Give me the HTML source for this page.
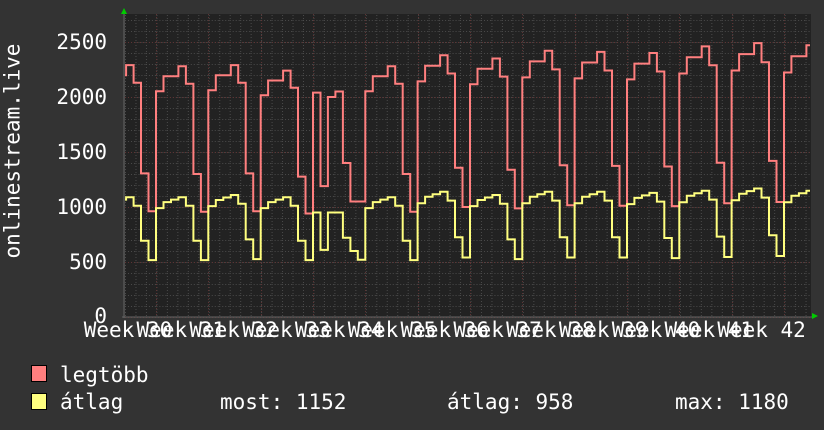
<!DOCTYPE html>
<html><head><meta charset="utf-8"><style>
body{margin:0;width:824px;height:430px;background:#333;overflow:hidden;position:relative;font-family:"DejaVu Sans Mono","Liberation Mono",monospace;color:#fff}
.t{position:absolute;font-size:21px;line-height:1;white-space:pre}
.yl{position:absolute;font-size:21px;line-height:1;width:80px;text-align:right;left:27px}
.xl{position:absolute;font-size:21px;line-height:1;width:90px;text-align:center;top:320px}
.sq{position:absolute;left:31px;width:14px;height:15px;border:1px solid #000}
</style></head><body>
<svg width="824" height="430" style="position:absolute;left:0;top:0">
<defs>
<pattern id="mg" x="125" y="317" width="10.47" height="11" patternUnits="userSpaceOnUse">
<line x1="0.5" y1="0" x2="0.5" y2="11" stroke="#4a4a4a" stroke-dasharray="1,2"/>
<line x1="0" y1="0.5" x2="10.47" y2="0.5" stroke="#4a4a4a" stroke-dasharray="1,2"/>
</pattern>
</defs>
<rect x="125" y="14" width="686" height="303" fill="#222"/>
<rect x="125" y="14" width="686" height="303" fill="url(#mg)"/>
<g id="maj" stroke="#5e3434" stroke-dasharray="1,2"></g>
<polyline id="red" fill="none" stroke="#ff7f7f" stroke-width="2"/>
<polyline id="yel" fill="none" stroke="#ffff7f" stroke-width="2"/>
<line x1="124" y1="12" x2="124" y2="318" stroke="#666"/>
<line x1="122" y1="317" x2="812" y2="317" stroke="#666"/>
<polygon points="121,14 127,14 124,8" fill="#0c0"/>
<polygon points="812,313 812,319 818,316" fill="#0c0"/>
</svg>
<div class="t" style="left:-80px;top:155px;transform:rotate(-90deg);width:186px;text-align:center">onlinestream.live</div>
<div class="yl" style="top:32px">2500</div>
<div class="yl" style="top:87px">2000</div>
<div class="yl" style="top:142px">1500</div>
<div class="yl" style="top:197px">1000</div>
<div class="yl" style="top:252px">500</div>
<div class="yl" style="top:306px">0</div>
<div id="xls"></div>
<div class="sq" style="top:365px;background:#ff7f7f"></div>
<div class="sq" style="top:393px;background:#ffff7f"></div>
<div class="t" style="left:60px;top:365px">legtöbb</div>
<div class="t" style="left:60px;top:392px">átlag</div>
<div class="t" style="left:220px;top:392px">most: 1152</div>
<div class="t" style="left:447px;top:392px">átlag: 958</div>
<div class="t" style="left:675px;top:392px">max: 1180</div>
<script>
var ns="http://www.w3.org/2000/svg";
var maj=document.getElementById("maj");
for(var v=0;v<=2500;v+=500){var y=317-v*0.11;var l=document.createElementNS(ns,"line");l.setAttribute("x1",125);l.setAttribute("x2",811);l.setAttribute("y1",y+0.5);l.setAttribute("y2",y+0.5);maj.appendChild(l);}
for(var k=0;k<13;k++){var x=Math.round(156+52.33*k)+0.5;var l=document.createElementNS(ns,"line");l.setAttribute("x1",x);l.setAttribute("x2",x);l.setAttribute("y1",14);l.setAttribute("y2",317);maj.appendChild(l);}
var xh="";for(var k=0;k<13;k++){xh+='<div class="xl" style="left:'+(128+52.8*k-45)+'px">Week '+(30+k)+'</div>';}
document.getElementById("xls").innerHTML=xh;
var rp=[0.9,0.96,0.96,1.0,0.93,0.57,0.42];
var yp=[0.9,0.95,0.97,0.99,0.92,0.63,0.47];
var peaksR=[2290,2280,2290,2240,2060,2280,2380,2350,2420,2410,2400,2460,2490,2470];
var peaksY=[1100,1100,1120,1100,960,1100,1150,1120,1150,1150,1140,1160,1180,1160];
function build(pat,peaks,special){var pts=[];var step=52.33/7;
for(var w=-1;w<13;w++){var x0=156+52.33*w;for(var d=0;d<7;d++){var v=peaks[w+1]*pat[d];
if(special&&w==3){v=special[d];}
var xa=x0+d*step,xb=x0+(d+1)*step;var y=317-v*0.11;
xa=Math.max(125,Math.min(810,xa));xb=Math.max(125,Math.min(810,xb));if(xb<=xa)continue;
pts.push(xa.toFixed(1)+","+y.toFixed(1));pts.push(xb.toFixed(1)+","+y.toFixed(1));}}
return pts.join(" ");}
document.getElementById("red").setAttribute("points",build(rp,peaksR,[2040,1190,2000,2050,1400,1050,1050]));
document.getElementById("yel").setAttribute("points",build(yp,peaksY,[950,610,950,950,720,600,520]));
</script>
</body></html>
